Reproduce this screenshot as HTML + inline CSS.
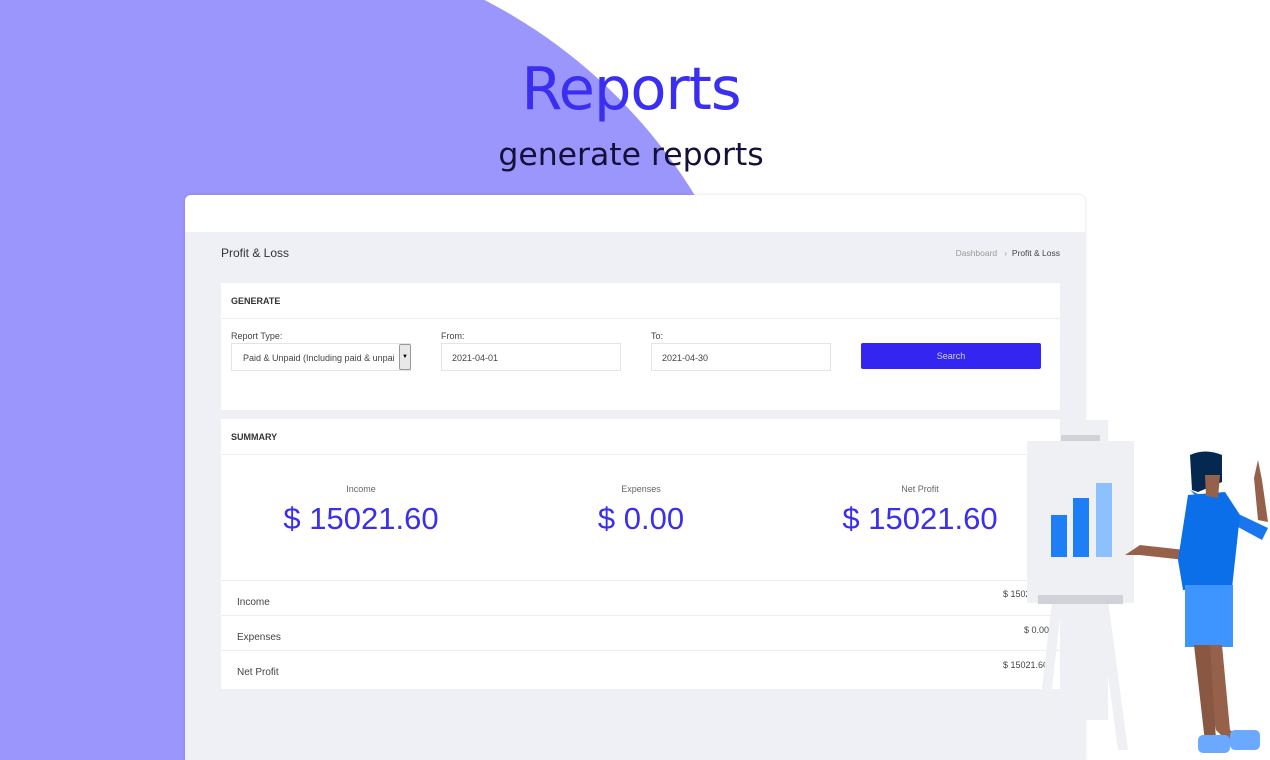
<!DOCTYPE html>
<html><head><meta charset="utf-8"><style>
*{margin:0;padding:0;box-sizing:border-box}
html,body{width:1270px;height:760px;overflow:hidden;background:#fff}
body{font-family:"Liberation Sans",sans-serif}
#w{position:relative;width:1270px;height:760px;overflow:hidden}
.circ{position:absolute;left:-291px;top:-59px;width:1064px;height:1064px;border-radius:50%;background:#9b96fc}
.t1{position:absolute;left:0;width:1262px;text-align:center;top:54px;font-size:59px;color:#3a2ef0;font-family:"DejaVu Sans","Liberation Sans",sans-serif;font-weight:normal;letter-spacing:-1px}
.t2{position:absolute;left:0;width:1262px;text-align:center;top:137px;font-size:31.5px;color:#15103a;font-family:"DejaVu Sans","Liberation Sans",sans-serif;font-weight:normal}
.card{position:absolute;left:185px;top:195px;width:900px;height:565px;background:#eff0f5;border-radius:6px 6px 0 0;overflow:hidden;box-shadow:0 0 3px rgba(0,0,0,.15)}
.top{height:37px;background:#fff}
.abs{position:absolute}
.panel{position:absolute;left:36px;width:839px;background:#fff}
.ph{height:36px;border-bottom:1px solid #eceef2;font-size:9px;font-weight:bold;color:#333;padding:13px 10px}
.lab{position:absolute;font-size:9px;color:#444}
.inp{position:absolute;height:28px;border:1px solid #e3e4e8;font-size:9px;color:#444;padding:9px 10px;background:#fff}
.big{position:absolute;width:280px;text-align:center;font-size:31px;color:#3a2ef0}
.sm{position:absolute;width:280px;text-align:center;font-size:9px;color:#666}
.row{position:absolute;left:0;width:839px;height:35px;border-top:1px solid #eceef2;font-size:10px;color:#444}
</style></head><body><div id="w">
<div class="circ"></div>
<div class="t1">Reports</div>
<div class="t2">generate reports</div>
<div class="card">
 <div class="top"></div>
 <div class="abs" style="left:36px;top:51px;font-size:12px;color:#333">Profit &amp; Loss</div>
 <div class="abs" style="right:25px;top:53px;font-size:8.5px;color:#999">Dashboard &nbsp;&nbsp;›&nbsp; <span style="color:#444">Profit &amp; Loss</span></div>
 <div class="panel" style="top:88px;height:127px">
  <div class="ph">GENERATE</div>
  <div class="lab" style="left:10px;top:48px">Report Type:</div>
  <div class="inp" style="left:10px;top:60px;width:180px;padding-left:11px;overflow:hidden;white-space:nowrap">Paid &amp; Unpaid (Including paid &amp; unpai</div>
  <div class="abs" style="left:178px;top:61px;width:12px;height:26px;background:#e8e8e8;border:1px solid #999;border-radius:2px;font-size:6px;text-align:center;line-height:24px">▼</div>
  <div class="lab" style="left:220px;top:48px">From:</div>
  <div class="inp" style="left:220px;top:60px;width:180px">2021-04-01</div>
  <div class="lab" style="left:430px;top:48px">To:</div>
  <div class="inp" style="left:430px;top:60px;width:180px">2021-04-30</div>
  <div class="abs" style="left:640px;top:60px;width:180px;height:26px;background:#3525f0;border-radius:2px;color:#cfd0ff;font-size:9px;text-align:center;line-height:26px">Search</div>
 </div>
 <div class="panel" style="top:224px;height:270px">
  <div class="ph">SUMMARY</div>
  <div class="sm" style="left:0;top:65px">Income</div>
  <div class="big" style="left:0;top:82px">$ 15021.60</div>
  <div class="sm" style="left:280px;top:65px">Expenses</div>
  <div class="big" style="left:280px;top:82px">$ 0.00</div>
  <div class="sm" style="left:559px;top:65px">Net Profit</div>
  <div class="big" style="left:559px;top:82px">$ 15021.60</div>
  <div class="row" style="top:161px"><span class="abs" style="left:16px;top:16px">Income</span><span class="abs" style="left:782px;top:8px;font-size:9px">$ 15021.60</span></div>
  <div class="row" style="top:196px"><span class="abs" style="left:16px;top:16px">Expenses</span><span class="abs" style="left:803px;top:9px;font-size:9px">$ 0.00</span></div>
  <div class="row" style="top:231px"><span class="abs" style="left:16px;top:16px">Net Profit</span><span class="abs" style="left:782px;top:9px;font-size:9px">$ 15021.60</span></div>
 </div>
</div>
<svg class="abs" style="left:1000px;top:420px" width="270" height="340" viewBox="0 0 270 340">
 <rect x="78" y="0" width="30" height="300" fill="#eef0f4"/>
 <polygon points="52,180 62,180 45,330 35,330" fill="#eef0f4"/>
 <polygon points="98,180 108,180 128,330 118,330" fill="#eef0f4"/>
 <rect x="61" y="15" width="39" height="10" fill="#d0d2d8"/>
 <rect x="27" y="21" width="107" height="162" fill="#eff0f3"/>
 <rect x="38" y="175" width="85" height="9" fill="#d0d2d8"/>
 <rect x="51" y="95" width="16" height="42" fill="#1e7ef5"/>
 <rect x="73" y="78" width="16" height="59" fill="#1e7ef5"/>
 <rect x="96" y="63" width="16" height="74" fill="#8cc0ff"/>
 <path d="M125,135 L140,125 L185,130 L185,140 L140,135 Z" fill="#96614a"/>
 <path d="M190,70 L230,90 L268,108 L262,120 L225,100 L215,95 Z" fill="#1a76ee"/>
 <path d="M254,58 L258,40 L262,60 L268,102 L258,100 Z" fill="#96614a"/>
 <path d="M188,75 L225,72 L240,95 L232,168 L183,170 L178,140 Z" fill="#0a6fe8"/>
 <rect x="185" y="165" width="48" height="62" fill="#3f95ff"/>
 <path d="M198,225 L222,225 L230,310 L250,325 L236,330 L216,310 Z" fill="#96614a"/>
 <path d="M194,225 L210,225 L216,320 L205,322 Z" fill="#8a5742"/>
 <rect x="198" y="315" width="32" height="18" rx="5" fill="#6aa9ff"/>
 <rect x="230" y="310" width="30" height="20" rx="5" fill="#6aa9ff"/>
 <path d="M190,35 Q205,28 222,35 L222,62 L198,72 L192,70 Z" fill="#04284f"/>
 <path d="M205,55 L220,55 L218,78 L206,76 Z" fill="#96614a"/>
</svg>
</div></body></html>
